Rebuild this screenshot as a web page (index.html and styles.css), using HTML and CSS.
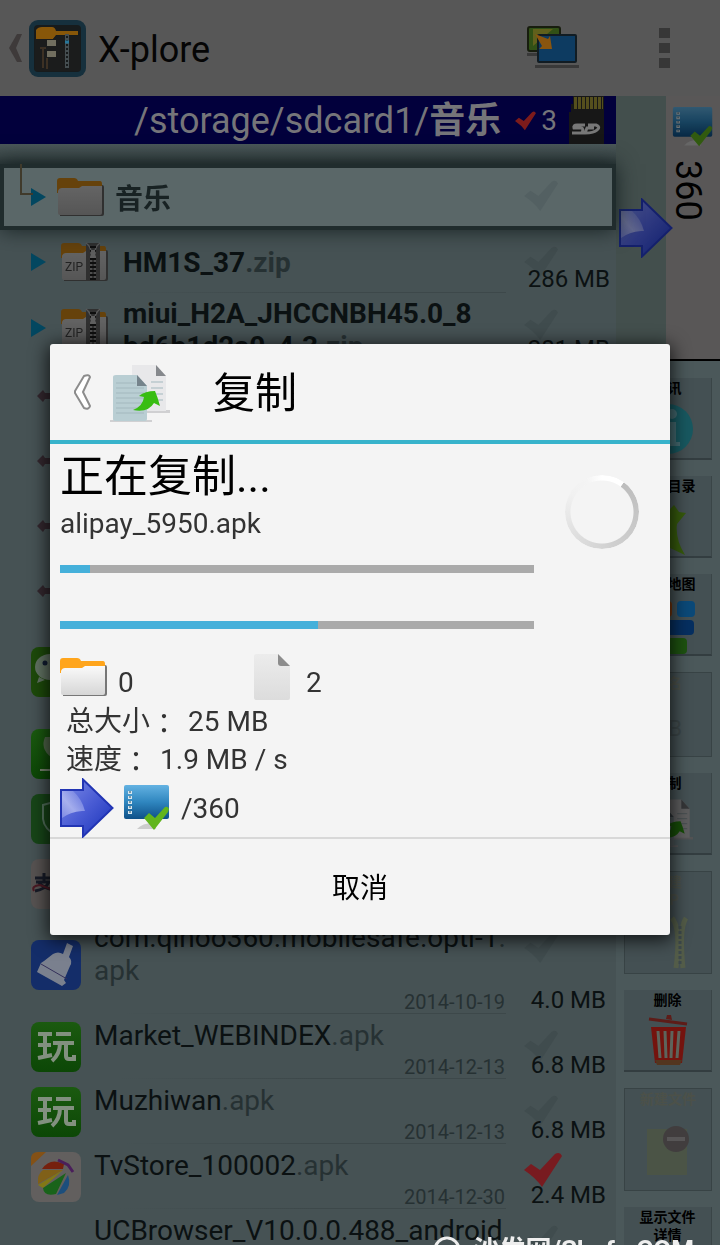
FILE: index.html
```html
<!DOCTYPE html>
<html lang="zh-CN">
<head>
<meta charset="utf-8">
<meta name="viewport" content="width=device-width, initial-scale=1">
<title>X-plore</title>
<link rel="stylesheet" href="styles.css">
</head>
<body>
<svg class="defs" width="0" height="0" aria-hidden="true">
  <defs>
    <linearGradient id="paper" x1="0" y1="0" x2="0" y2="1"><stop offset="0" stop-color="#fafafa"/><stop offset="1" stop-color="#d6d6d6"/></linearGradient>
    <linearGradient id="sheet" x1="0" y1="0" x2="0" y2="1"><stop offset="0" stop-color="#ececec"/><stop offset="1" stop-color="#dcdcdc"/></linearGradient>
    <linearGradient id="screen" x1="0" y1="0" x2="0" y2="1"><stop offset="0" stop-color="#63b2e2"/><stop offset=".5" stop-color="#2f86bf"/><stop offset="1" stop-color="#0e5088"/></linearGradient>
    <linearGradient id="arrowfill" x1="0" y1="0" x2="1" y2="1"><stop offset="0" stop-color="#7f8ee6"/><stop offset=".5" stop-color="#4a5cd4"/><stop offset="1" stop-color="#1730b8"/></linearGradient>
    <linearGradient id="arrowshine" x1="0" y1="1" x2="1" y2="0"><stop offset="0" stop-color="#8f9ae8"/><stop offset=".4" stop-color="#c3c9f5"/><stop offset="1" stop-color="#5f70dd"/></linearGradient>
    <linearGradient id="greenapp" x1="0" y1="0" x2="0" y2="1"><stop offset="0" stop-color="#1b5a10"/><stop offset="1" stop-color="#0c4706"/></linearGradient>
    <symbol id="folder" viewBox="0 0 48 42">
      <path d="M3 9h42a2 2 0 0 1 2 2v27a2 2 0 0 1-2 2H3z" fill="#777"/>
      <path d="M0 17V5q0-3 3-3h14q3 0 4 3h22q2 0 2 3v9z" fill="#ffa51c"/>
      <path d="M1 15q1-3 4-3h17l3-2h20v27q0 2-2 2H3q-2 0-2-2z" fill="url(#paper)"/>
    </symbol>
    <symbol id="zip" viewBox="0 0 48 42">
      <use href="#folder" width="48" height="42"/>
      <path d="M25 2h14v37H25z" fill="#777"/>
      <path d="M25 2q7 5 5 17v20M39 2q-7 5-5 17v20" fill="none" stroke="#ddd" stroke-width="1.5"/>
      <path d="M32 5v34" stroke="#222" stroke-width="6" stroke-dasharray="2 2"/>
      <path d="M30 9h4l1 8h-6z" fill="#eee"/>
      <text x="4" y="30" font-size="12" font-family="Roboto,sans-serif" fill="#555">ZIP</text>
    </symbol>
    <symbol id="arrow" viewBox="0 0 54 60">
      <path d="M1 12h22V1.500L52.500 30 23 58.500V48H1z" fill="url(#arrowfill)" stroke="#2235b4" stroke-width="2"/>
      <path d="M2 13h11q9 8 12 20l-3 0Q10 34 2 40z" fill="url(#arrowshine)" opacity=".7"/>
    </symbol>
    <symbol id="monitor" viewBox="0 0 48 48">
      <path d="M14 45q6-7 19-6v6z" fill="#ccc"/>
      <rect x="1" y="1" width="45" height="34" rx="2" fill="url(#screen)"/>
      <path d="M7 7v25" stroke="#d8e6ee" stroke-width="4" stroke-dasharray="3 2"/>
      <path d="M7 7v25" stroke="#7d9aa8" stroke-width="2" stroke-dasharray="2 3"/>
      <path d="M21 34l5-5 6 5 10-11q3-1 4 2l-1 3-14 18z" fill="#62b51e"/>
    </symbol>
    <symbol id="check" viewBox="0 0 40 36">
      <path d="M0 18l7-6 9 6L31 2q5-3 7 2L18 35q-6-9-18-17z"/>
    </symbol>
    <symbol id="copy" viewBox="0 0 60 60">
      <path d="M24 48h36v3H24zM0 58h42v3H0z" fill="#d0d0d2"/>
      <path d="M22 3h24l10 11v35H22z" fill="#e8e8ea"/>
      <path d="M46 3v11h10z" fill="#85888c"/>
      <path d="M3 15q0-2 3-2h21l10 11v33q0 2-2 2H6q-3 0-3-2z" fill="#b9ced3"/>
      <path d="M6 21h20M6 26h28M6 31h28M6 36h28M6 41h28M6 46h28M6 51h28M41 20h12M41 26h12M41 32h12M41 38h12" stroke="#a3b8be" stroke-width="1"/>
      <path d="M27 13v11h10z" fill="#75838b"/>
      <path d="M23 48q10-4 11-13l-5-1q6-5 16-5 3 7 5 15l-6-3Q38 51 23 48z" fill="#38bd12"/>
    </symbol>
    <symbol id="wan" viewBox="0 0 50 50">
      <rect width="50" height="50" rx="8" fill="url(#greenapp)"/>
      <path d="M7 12h14M7 23h13M7 36l14-3M14 12v23M25 12h15M22 21h21M29 21q0 11-8 18M35 21v13q0 3 3 3h5v-4" fill="none" stroke="#82907f" stroke-width="4"/>
    </symbol>
    <symbol id="note" viewBox="0 0 14 16"><path d="M1 8l6-6 2 3h5v6H9l-2 3z" fill="#33272e"/></symbol>
  </defs>
</svg>

<div class="app">
  <header class="bar">
    <button class="up" aria-label="返回">
      <svg width="16" height="30" viewBox="0 0 16 30"><path d="M9 1h5L8 15l6 14H9L1 15z" fill="#3e3a3a"/></svg>
      <svg width="57" height="57" viewBox="0 0 57 57">
        <rect width="57" height="57" rx="9" fill="#16303d"/>
        <rect x="5" y="5" width="47" height="47" rx="4" fill="#171b1c"/>
        <path d="M7 17V10q2-3 6-3h10q3 0 4 4h22v4H27l-3 4H7z" fill="#885709"/>
        <path d="M6 19h18l3-3h24v35H6z" fill="#1b1c1c"/>
        <path d="M18 20h9v6h-9zM18 31h9v6h-9z" fill="#716e5f"/>
        <path d="M14 28v20M18 38v11M11 28h6" stroke="#3d3124" stroke-width="2"/>
        <path d="M38 14v34" stroke="#454e51" stroke-width="4"/><path d="M38 16v34" stroke="#171b1c" stroke-width="2" stroke-dasharray="2 2"/>
        <path d="M36 22h4" stroke="#28779a" stroke-width="3"/>
      </svg>
    </button>
    <h1>X-plore</h1>
    <button class="swap" aria-label="切换窗格">
      <svg width="52" height="44" viewBox="0 0 52 44">
        <path d="M0 27h20v3H0zM8 39h44v3H8z" fill="#393939"/>
        <rect x="1" y="1" width="32" height="24" rx="2" fill="#315016" stroke="#171d0e" stroke-width="2"/>
        <path d="M6 3h20L6 20z" fill="#60601c"/>
        <rect x="11" y="9" width="38" height="27" rx="1" fill="#0d3b61" stroke="#111c23" stroke-width="2"/>
        <path d="M8 8l13 5 2-3 2 13H12l3-3z" fill="#89550f"/>
      </svg>
    </button>
    <button class="more" aria-label="更多"><i></i><i></i><i></i></button>
  </header>

  <main class="panes">
    <section class="pane">
      <div class="path">
        <span>/storage/sdcard1/<b>音乐</b></span>
        <svg class="redcheck" width="22" height="20" aria-hidden="true"><use href="#check"/></svg>
        <span class="count">3</span>
        <svg width="35" height="48" viewBox="0 0 35 48" aria-hidden="true">
          <path d="M4 0h31v48H0V16h2V8h2z" fill="#171717"/>
          <path d="M5 7h29" stroke="#554f1d" stroke-width="12" stroke-dasharray="3 1"/>
          <path d="M16 29H8q-4 0-3 3h7q3 0 1 5H3M19 29h8q5 2 1 5-3 3-12 3l2-5h7" fill="none" stroke="#777" stroke-width="3"/>
        </svg>
      </div>
      <ul class="files">
        <li class="row selected">
          <svg class="tree" width="18" height="36" viewBox="0 0 18 36"><path d="M2 0v30h12" fill="none" stroke="#403a2b" stroke-width="2"/></svg>
          <i class="tri"></i>
          <svg class="dim" width="48" height="42"><use href="#folder"/></svg>
          <span class="name">音乐</span>
          <span class="meta"><svg class="tick" width="36" height="32"><use href="#check"/></svg></span>
        </li>
        <li class="row archive first">
          <i class="tri"></i><svg class="dim" width="48" height="42"><use href="#zip"/></svg>
          <span class="name">HM1S_37<em>.zip</em></span>
          <span class="meta"><svg class="tick" width="36" height="32"><use href="#check"/></svg><span>286 MB</span></span>
        </li>
        <li class="row archive second">
          <i class="tri"></i><svg class="dim" width="48" height="42"><use href="#zip"/></svg>
          <span class="name">miui_H2A_JHCCNBH45.0_8<br>bd6b1d2a0_4.3<em>.zip</em></span>
          <span class="meta"><svg class="tick" width="36" height="32"><use href="#check"/></svg><span>281 MB</span></span>
        </li>
        <li class="row song"><svg width="14" height="16"><use href="#note"/></svg></li>
        <li class="row song"><svg width="14" height="16"><use href="#note"/></svg></li>
        <li class="row song"><svg width="14" height="16"><use href="#note"/></svg></li>
        <li class="row song"><svg width="14" height="16"><use href="#note"/></svg></li>
        <li class="row tall">
          <svg width="50" height="50" viewBox="0 0 50 50"><rect width="50" height="50" rx="8" fill="#1d4a0a"/><ellipse cx="19" cy="20" rx="15" ry="13" fill="#617262"/><circle cx="14" cy="16" r="2.500" fill="#111d32"/><path d="M8 30l-2 6 8-3z" fill="#617262"/></svg>
        </li>
        <li class="row">
          <svg width="50" height="50" viewBox="0 0 50 50"><rect width="50" height="50" rx="8" fill="url(#greenapp)"/><path d="M14 8q-5 12 6 20l6 2V8z" fill="#52684b"/><path d="M9 41h12" stroke="#77836f" stroke-width="2"/></svg>
        </li>
        <li class="row">
          <svg width="50" height="50" viewBox="0 0 50 50"><rect width="50" height="50" rx="8" fill="#174518"/><path d="M12 11l14-4 14 4v14q-2 10-14 17-13-7-14-17zM19 20h13" fill="none" stroke="#53705c" stroke-width="2"/></svg>
        </li>
        <li class="row">
          <svg width="50" height="50" viewBox="0 0 50 50"><rect width="50" height="50" rx="8" fill="#575352"/><path d="M4 19h20M13 14v9M5 23h13q-3 7-14 9M8 24q5 5 15 7" fill="none" stroke="#171b27" stroke-width="3"/><path d="M3 32q-3-5 6-6 8 3 15 6" fill="none" stroke="#4b1923" stroke-width="2"/></svg>
        </li>
        <li class="row tall">
          <svg width="50" height="50" viewBox="0 0 50 50"><rect width="50" height="50" rx="8" fill="#142d69"/><path d="M32 14l4-11 6 3-4 11q4 4 1 9L33 40l2 3-4 3L6 32l4-9 3-2 9-7q5-3 10 0z" fill="#7a808e"/><path d="M10 24l26 15" stroke="#34305a"/></svg>
          <span class="name">com.qihoo360.mobilesafe.opti-1<em>.<br>apk</em></span><span class="date">2014-10-19</span>
          <span class="meta"><svg class="tick" width="36" height="32"><use href="#check"/></svg><span>4.0 MB</span></span>
        </li>
        <li class="row">
          <svg width="50" height="50"><use href="#wan"/></svg>
          <span class="name">Market_WEBINDEX<em>.apk</em></span><span class="date">2014-12-13</span>
          <span class="meta"><svg class="tick" width="36" height="32"><use href="#check"/></svg><span>6.8 MB</span></span>
        </li>
        <li class="row">
          <svg width="50" height="50"><use href="#wan"/></svg>
          <span class="name">Muzhiwan<em>.apk</em></span><span class="date">2014-12-13</span>
          <span class="meta"><svg class="tick" width="36" height="32"><use href="#check"/></svg><span>6.8 MB</span></span>
        </li>
        <li class="row">
          <svg width="50" height="50" viewBox="0 0 50 50"><rect width="50" height="50" rx="8" fill="#625f5e"/><path d="M0 14V7q0-7 7-7h8z" fill="#845116"/><path d="M11 17Q19 5 33 12l-1 5z" fill="#76200e"/><path d="M7 32q-1-10 5-14h20z" fill="#806018"/><path d="M32 18L7 33l5 3z" fill="#827815"/><path d="M35 21L12 36q1 9 13 6z" fill="#19631a"/><path d="M37 23q4 11-4 18l-7 2z" fill="#1c4e7c"/><path d="M27 8l10 5 5 7" fill="none" stroke="#4a1e5b" stroke-width="3"/></svg>
          <span class="name">TvStore_100002<em>.apk</em></span><span class="date">2014-12-30</span>
          <span class="meta checked"><svg class="tick" width="40" height="36"><use href="#check"/></svg><span>2.4 MB</span></span>
        </li>
        <li class="row tall">
          <span class="noicon"></span>
          <span class="name">UCBrowser_V10.0.0.488_android</span>
          <span class="meta"><svg class="tick" width="36" height="32"><use href="#check"/></svg></span>
        </li>
      </ul>
    </section>

    <aside class="side">
      <div class="other">
        <svg class="to" width="54" height="60"><use href="#arrow"/></svg>
        <div class="tab"><svg width="42" height="42"><use href="#monitor"/></svg><span>360</span></div>
      </div>
      <div class="tools">
        <button>资讯<svg width="56" height="56" viewBox="0 0 56 56"><circle cx="28" cy="27" r="25" fill="#185860"/><circle cx="32" cy="12" r="5" fill="#456a70"/><path d="M24 20h12v20h4v4H26v-4h3V24h-5z" fill="#456a70"/></svg></button>
        <button>常用目录<svg width="56" height="56" viewBox="0 0 56 56"><path d="M14 1l14 10 6-6 5 7 7 1-9 11q-2 15 8 31l-17-8-18 3 7-18L6 14l12 1z" fill="#365a0c"/></svg></button>
        <button>磁盘地图<svg width="56" height="56" viewBox="0 0 56 56"><rect x="2" y="3" width="30" height="16" rx="4" fill="#71330c"/><rect x="37" y="3" width="18" height="16" rx="4" fill="#0b4978"/><rect x="16" y="22" width="38" height="15" rx="4" fill="#062f60"/><rect x="8" y="40" width="39" height="16" rx="4" fill="#1d5210"/></svg></button>
        <button class="off fourth" disabled>改名<b>AB</b></button>
        <button>复制<svg class="dim" width="50" height="50"><use href="#copy"/></svg></button>
        <button class="off high" disabled>创建<br>ZIP<svg width="48" height="56" viewBox="0 0 48 56"><path d="M28 4q9 10 4 50M42 4q-7 10-3 50" fill="none" stroke="#535c48" stroke-width="5"/><path d="M36 12v40" stroke="#3d484c" stroke-width="3" stroke-dasharray="3 2"/></svg></button>
        <button>删除<svg width="42" height="52" viewBox="0 0 42 52"><path d="M2 5l38 5" stroke="#5d1c18" stroke-width="3"/><path d="M19 5l1-4h4l1 5" fill="#5d1c18"/><path d="M4 13h35l-4 36H8z" fill="#74130e"/><path d="M11 17l2 27M18 17l1 27M25 17l-1 27M32 17l-2 27" stroke="#5d645c" stroke-width="3"/><path d="M8 46h27l-2 5H10z" fill="#53351f"/></svg></button>
        <button class="off high" disabled>新建文件<svg width="48" height="66" viewBox="0 0 48 66"><path d="M3 16h40v46H3z" fill="#4b5446"/><circle cx="32" cy="26" r="13" fill="#413d3e"/><path d="M23 26h18" stroke="#575556" stroke-width="4"/></svg></button>
        <button>显示文件<br>详情</button>
      </div>
    </aside>
  </main>
  <div class="mark"><svg width="30" height="30" viewBox="0 0 30 30"><circle cx="15" cy="15" r="12" fill="none" stroke="#eee" stroke-width="3"/></svg><b>沙发网/Shafa.COM</b></div>
</div>

<div class="overlay">
  <div class="dialog" role="dialog" aria-modal="true" aria-labelledby="title">
    <header class="dhead">
      <svg width="22" height="38" viewBox="0 0 22 38"><path d="M14 3q5-2 6 1l-7 15 7 14q-1 4-6 2L5 20v-2z" fill="#fff" stroke="#8c8c8c" stroke-width="2" stroke-linejoin="round"/></svg>
      <svg width="60" height="60"><use href="#copy"/></svg>
      <h2 id="title">复制</h2>
    </header>
    <div class="body">
      <div class="work">
        <div class="bars">
          <p class="status">正在复制...</p>
          <p class="file">alipay_5950.apk</p>
          <progress value="6.400" max="100" aria-label="当前文件"></progress>
          <progress value="54.500" max="100" aria-label="总进度"></progress>
        </div>
        <i class="spinner"></i>
      </div>
      <div class="counts">
        <span><svg width="48" height="42"><use href="#folder"/></svg>0</span>
        <span><svg width="40" height="48" viewBox="0 0 40 48"><path d="M1 3q0-2 3-2h21l12 12v32q0 2-2 2H4q-3 0-3-2z" fill="url(#sheet)"/><path d="M25 1v9q0 3 3 3h9z" fill="#8c8c8c"/></svg>2</span>
      </div>
      <p class="stat"><span>总大小</span><span class="colon" lang="zh-TW">：</span><span>25 MB</span></p>
      <p class="stat"><span>速度</span><span class="colon" lang="zh-TW">：</span><span>1.9 MB / s</span></p>
      <div class="dest"><svg width="54" height="60"><use href="#arrow"/></svg><svg width="48" height="48"><use href="#monitor"/></svg><span>/360</span></div>
    </div>
    <button class="cancel">取消</button>
  </div>
</div>
</body>
</html>
```

FILE: styles.css
```css
* { box-sizing: border-box; }
body {
  margin: 0;
  background: #465254;
  color: #0b1112;
  font-family: Roboto, "Noto Sans CJK SC", sans-serif;
}
h1, h2, p, ul { margin: 0; padding: 0; font-weight: 400; }
button { font: inherit; color: inherit; border: 0; padding: 0; background: none; }
em { font-style: normal; color: #263133; }
svg { display: block; flex: none; overflow: visible; }
.defs { position: absolute; }
.dim { filter: brightness(.4); }

.app { position: relative; height: 100vh; overflow: hidden; display: flex; flex-direction: column; }
.bar { display: flex; align-items: center; height: 96px; flex: none; padding: 0 50px 0 8px; background: #575757; }
.up { display: flex; align-items: center; gap: 5px; }
.bar h1 { flex: 1; padding: 4px 0 0 12px; font-size: 36px; line-height: 42px; color: #050505; }
.more { display: flex; flex-direction: column; gap: 5px; margin-left: 80px; }
.more i { width: 11px; height: 10px; background: #373737; }

.panes { display: grid; grid-template-columns: minmax(0, 1fr) 104px; flex: 1; min-height: 0; }
.pane { min-width: 0; }
.path { display: flex; align-items: center; justify-content: flex-end; height: 48px; padding: 2px 12px 0 0; background: #02003c; color: #757579; font-size: 36px; line-height: 46px; white-space: nowrap; }
.path svg:last-child { align-self: flex-end; }
.redcheck { margin: 0 4px 0 14px; fill: #7d1b1b; }
.count { font-size: 28px; margin-right: 12px; }

.files { list-style: none; padding-top: 20px; background: linear-gradient(#4b5859, #3c4849 12px, #253132 24px, #465254 25px); }
.row { position: relative; display: flex; align-items: center; height: 65px; padding-left: 31px; }
.row:not(.selected)::after { content: ""; position: absolute; left: 120px; right: 110px; bottom: 0; height: 1px; background: linear-gradient(90deg, #465254, #3d484a 50%); }
.name { flex: 1; align-self: flex-start; padding: 5px 0 0 13px; font-size: 28px; line-height: 33px; white-space: nowrap; }
.date { position: absolute; right: 111px; bottom: 0; font-size: 20px; line-height: 23px; color: #263133; }
.meta { align-self: stretch; display: flex; align-items: flex-end; justify-content: flex-end; position: relative; width: 92px; margin-right: 10px; font-size: 24px; line-height: 28px; }
.meta span { position: relative; }
.tick { position: absolute; left: 10px; top: 16px; fill: #404c4e; }
.checked .tick { top: 8px; fill: #781b20; z-index: 1; }
.tall { height: 98px; }
.selected { z-index: 1; height: 66px; padding-left: 27px; border: 4px solid #202c2d; background: #5a6768; box-shadow: 0 0 20px #172223; }
.selected .name { padding: 6px 0 0 10px; align-self: center; line-height: 40px; font-weight: 700; color: #182223; }
.selected .tick { top: 12px; left: 14px; fill: #536062; }
.tree { position: absolute; left: 15px; top: -4px; }
.tri { width: 0; height: 0; flex: none; border: solid transparent; border-width: 9px 0 9px 15px; border-left-color: #034760; margin-right: 11px; }
.archive .dim { margin-left: 4px; }
.archive .name { font-weight: 700; padding-left: 14px; }
.archive .meta { margin-right: 6px; }
.archive .tick { left: 6px; }
.first { height: 63px; }
.first .name { padding-top: 16px; }
.second { height: 70px; }
.second .name { padding-top: 4px; }
.song { padding-left: 36px; }
.noicon { width: 50px; }

.side { display: flex; flex-direction: column; min-height: 0; background: #4b585a; }
.other { position: relative; display: flex; justify-content: flex-end; height: 265px; flex: none; background: #434f4d; border-bottom: 2px solid #000; }
.tab { width: 54px; padding: 10px 6px 0; background: #595757; }
.tab svg { filter: brightness(.5); }
.tab span { display: block; writing-mode: vertical-rl; margin: 12px 0 0 -6px; font-size: 36px; line-height: 44px; color: #000; }
.to { position: absolute; left: 3px; top: 102px; filter: brightness(.6); }
.tools { display: flex; flex-direction: column; gap: 16px; padding: 17px 8px 0; }
.tools button { display: flex; flex-direction: column; align-items: center; flex: none; height: 82px; overflow: hidden; padding-top: 1px; background: #445053; border-bottom: 2px solid #333d40; border-right: 1px solid #3a4547; font-size: 14px; line-height: 18px; font-weight: 700; color: #000; }
.tools button svg { margin-top: 5px; }
.tools .off { border: 1px solid #384345; color: #4c5149; }
.tools .fourth { height: 85px; }
.tools .high { height: 103px; }
.off b { margin-top: 28px; font-size: 22px; font-weight: 400; color: #3b4547; }
.mark { position: absolute; z-index: 3; right: 26px; bottom: -20px; display: flex; align-items: center; gap: 11px; color: #eee; font-size: 26px; line-height: 30px; }

.overlay { position: fixed; inset: 0; display: flex; align-items: center; padding: 34px 50px 0; }
.dialog { flex: 1; min-width: 0; overflow: hidden; border-radius: 3px; background: #f4f4f4; color: #333; box-shadow: 0 3px 18px 2px rgba(0, 0, 0, .75); }
.dhead { display: flex; align-items: center; height: 100px; padding-left: 20px; border-bottom: 4px solid #38b3cb; color: #000; }
.dhead svg + svg { margin: 0 0 0 18px; }
.dhead h2 { margin-left: 43px; padding-top: 4px; font-size: 42px; line-height: 60px; }
.body { padding-left: 10px; font-size: 28px; border-bottom: 2px solid #d8d8d8; }
.work { display: flex; align-items: flex-start; padding-right: 31px; }
.bars { flex: 1; margin-right: 31px; }
.status { padding-top: 3px; font-size: 44px; line-height: 60px; color: #000; }
.file { line-height: 34px; }
progress { display: block; appearance: none; width: 100%; height: 8px; margin-top: 24px; border: 0; background: #aaa; }
progress + progress { margin-top: 48px; }
progress::-webkit-progress-bar { background: #aaa; }
progress::-webkit-progress-value { background: #45b0da; }
.spinner { width: 74px; height: 74px; margin-top: 31px; border-radius: 50%; background: conic-gradient(#fff 0 36deg, #bdbdbd 37deg, #cfcfcf 160deg, #e4e4e4 250deg, #f1f1f1 300deg, #f4f4f4 335deg, #fff); mask: radial-gradient(closest-side, transparent 31px, #000 32px); }
.counts { display: flex; align-items: flex-start; height: 73px; padding-top: 24px; }
.counts span { display: flex; align-items: flex-start; width: 193px; gap: 10px; line-height: 60px; }
.counts span + span { gap: 13px; }
.counts span:first-child svg { margin-top: 3px; }
.stat { display: flex; height: 38px; padding: 1px 0 0 6px; line-height: 38px; }
.colon { font-family: "Noto Sans CJK TC", sans-serif; margin-right: 10px; }
.dest { display: flex; align-items: center; height: 59px; }
.dest svg + svg { margin: 0 10px 0 9px; }
.dest span { padding-top: 2px; }
.cancel { display: block; width: 100%; height: 96px; padding-top: 4px; font-size: 28px; line-height: 40px; color: #000; }
```
